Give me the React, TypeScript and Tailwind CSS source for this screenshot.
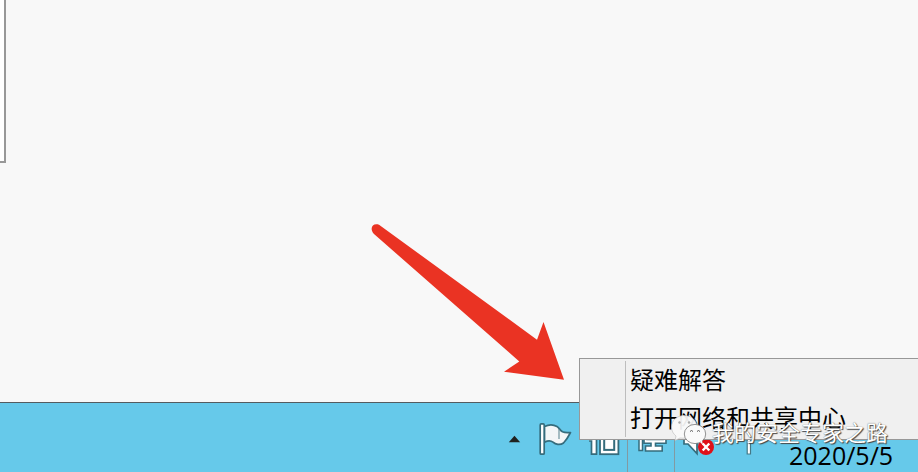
import React from "react";

function FlagIcon() {
  return (
    <svg className="ml-[17px] mt-[19px] h-[34px] w-[34px] shrink-0" viewBox="538 422 34 34">
      <path
        d="M544.5 426.5c4-2 9-2 12.500 0 2 1.200 3 3.800 5.500 5.300 2.500 1.200 5.500 1 8 .7-1.500 3-3.500 7-7 10.500-3.500 2.500-8 1.500-10.500-.8-2.500-2-5.500-1.500-8.500 0z"
        fill="#f4f6f7" stroke="#356c7c" strokeWidth="1.7" strokeLinejoin="round"
      />
      <path d="M559 429v10" stroke="#56818c" strokeWidth="1" />
      <rect x="540.200" y="423.900" width="4" height="30.300" rx="1" fill="#fff" stroke="#356c7c" strokeWidth="1.700" />
    </svg>
  );
}

function DeviceIcon() {
  return (
    <svg className="ml-[17px] mt-[19px] h-[34px] w-[32px] shrink-0" viewBox="589 422 32 34">
      <path d="M588 432h8.500v22.200h-5V441H588z" fill="#fff" stroke="#356c7c" strokeWidth="1.700" />
      <rect x="600" y="430" width="18.400" height="24.200" fill="#fff" stroke="#356c7c" strokeWidth="1.800" />
      <rect x="604.200" y="434" width="10" height="15.900" fill="#fff" stroke="#356c7c" strokeWidth="2" />
    </svg>
  );
}

function NetworkIcon() {
  return (
    <svg className="ml-[9px] mt-[19px] h-[34px] w-[32px] shrink-0" viewBox="637 422 32 34">
      <path
        d="M644 430h22v13.200h-10.500v2.800h6.700v5h-16.700v-5h5.500v-2.800h-7z"
        fill="#fff" stroke="#356c7c" strokeWidth="1.600"
      />
      <path d="M639 430h3.500v20.500H639z" fill="#fff" stroke="#356c7c" strokeWidth="1.500" />
      <path d="M647 434h16v5.500h-16z" fill="#5fb6d3" stroke="#356c7c" strokeWidth="1.500" />
    </svg>
  );
}

function SpeakerIcon() {
  return (
    <svg className="ml-[7px] mt-[19px] h-[36px] w-[34px] shrink-0" viewBox="682 422 34 36">
      <path d="M684 432h5l8-7v28.500l-9-9.500h-4z" fill="#fff" stroke="#356c7c" strokeWidth="1.700" />
      <circle cx="706" cy="447" r="8" fill="#df1018" />
      <path d="m702.700 443.500 6.600 7m0-7-6.600 7" stroke="#fff" strokeWidth="2.400" />
    </svg>
  );
}

function ImeIcon() {
  return (
    <svg className="ml-[18px] mt-[19px] h-[34px] w-[32px] shrink-0" viewBox="734 422 32 34">
      <path d="M736 430h26v10h-11.500v14h-3.300v-14H736z" fill="#fff" stroke="#447886" strokeWidth="1.200" />
    </svg>
  );
}

function Taskbar() {
  return (
    <footer className="flex h-[70px] w-full items-start overflow-hidden border-t border-[#545c60] bg-[#66c9ea] pl-[508px]">
      <svg className="mt-[32px] h-[8px] w-[13px] shrink-0" viewBox="508 435 13 8">
        <path d="M508.800 442.200 514.500 435.800l5.700 6.400z" fill="#20211f" />
      </svg>
      <FlagIcon />
      <DeviceIcon />
      <div className="ml-[6px] h-full w-px shrink-0 bg-[#829aa2]" />
      <NetworkIcon />
      <div className="ml-[5px] h-full w-px shrink-0 bg-[#829aa2]" />
      <SpeakerIcon />
      <ImeIcon />
      <time className="ml-[23px] mt-[36px] whitespace-nowrap font-['Open_Sans','Noto_Sans',sans-serif] text-[25px] leading-[32px] text-black">
        2020/5/5
      </time>
    </footer>
  );
}

function ContextMenu() {
  return (
    <div className="absolute left-[579px] top-[358px] flex h-[82px] w-[345px] border border-[#989898] bg-[#f0f0f0] pt-[2px]">
      <div className="ml-[45px] h-[76px] w-px bg-[#bdbdbd]" />
      <ul className="-mt-px ml-[4px] font-['Noto_Sans_CJK_SC',sans-serif] text-[24px] leading-[38px] text-black">
        <li>疑难解答</li>
        <li>打开网络和共享中心</li>
      </ul>
    </div>
  );
}

function Watermark() {
  return (
    <div className="absolute left-[670px] top-[413px] flex items-start">
      <svg className="h-[34px] w-[38px]" viewBox="670 413 38 34">
        <path d="M684 415.500c-7 0-12.500 5-12.500 11.500 0 4 2 7 4.500 9l-1 4.500 5-2.500c8 1 17-2 17-11 0-7-6-11.500-13-11.500z" fill="#fafafa" fillOpacity=".93" stroke="#bbb" strokeWidth=".6" />
        <ellipse cx="695" cy="434" rx="10.700" ry="9.600" fill="#fafafa" stroke="#777" strokeWidth=".8" />
        <path d="m700 442 3 3.300-1-5z" fill="#fafafa" />
        <g fill="#aaa">
          <circle cx="679.500" cy="422.500" r="1.200" />
          <circle cx="689" cy="422.500" r="1.200" />
          <path d="M690 431.500q1.500-2 3 0m4 0q1.500-2 3 0" fill="none" stroke="#555" strokeWidth="1" />
        </g>
      </svg>
      <span className="ml-[4px] whitespace-nowrap font-['Noto_Sans_CJK_SC',sans-serif] text-[22px] leading-[36px] text-white [text-shadow:1px_1px_1px_#444,0_0_1px_#555]">
        我的安全专家之路
      </span>
    </div>
  );
}

export default function App() {
  return (
    <main className="relative flex h-[472px] w-[918px] flex-col overflow-hidden bg-[#f8f8f8]">
      <section className="flex-1">
        <div className="h-[163px] w-[6px] border-b-2 border-r-2 border-[#989898] bg-white" />
      </section>
      <Taskbar />
      <svg className="absolute left-[360px] top-[215px] h-[175px] w-[220px]" viewBox="0 0 220 175">
        <path d="M19 9.700 177 124.700 183.500 107 204 164.700 144 156.700 159.300 146.500 14 19C9 13.500 12.500 7.500 19 9.700z" fill="#ea3323" />
      </svg>
      <ContextMenu />
      <Watermark />
    </main>
  );
}
